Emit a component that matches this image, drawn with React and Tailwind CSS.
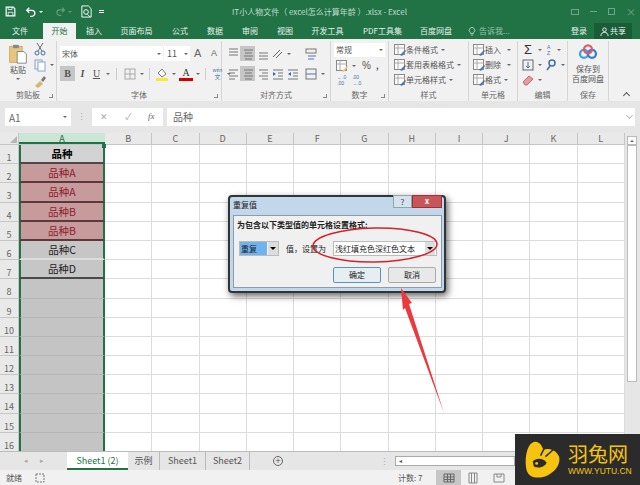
import React from "react";

const F = { fontFamily: '"Noto Sans CJK SC","Liberation Sans",sans-serif' };
const cols = ["B","C","D","E","F","G","H","I","J","K","L"];
const rows = Array.from({ length: 16 }, (_, i) => i + 1);
const pink = "bg-[#c79a9c] text-[#8c1c2c] border-b-2 border-b-[#5a3a3c]";
const cellA = {
  1: ["品种", "bg-[#d3d3d3] text-black font-bold border-b-2 border-b-[#4a4a4a]"],
  2: ["品种A", pink],
  3: ["品种A", pink],
  4: ["品种B", pink],
  5: ["品种B", pink],
  6: ["品种C", "bg-[#c6c6c6] text-[#222] border-b-2 border-b-[#dcdcdc]"],
  7: ["品种D", "bg-[#c6c6c6] text-[#222] border-b-2 border-b-[#4a4a4a]"],
};

function Caret({ className = "ml-[3px]" }) {
  return <span className={`w-0 h-0 border-x-[2px] border-x-transparent border-t-[2px] border-t-[#666] inline-block shrink-0 ${className}`} />;
}

function Group({ label, w, children, launcher }) {
  return (
    <div className={`${w} shrink-0 h-full flex flex-col border-r border-[#d5d5d5] relative`}>
      <div className="flex-1 min-h-0 flex">{children}</div>
      <div className="h-[14px] pt-px text-[8px] leading-[13px] text-[#666] text-center">{label}</div>
      {launcher && <span className="absolute right-[3px] bottom-[3px] w-[4px] h-[4px] border-r border-b border-[#888]" />}
    </div>
  );
}

function Ico({ children, className = "" }) {
  return <svg viewBox="0 0 14 14" className={`w-[14px] h-[14px] shrink-0 ${className}`} fill="none">{children}</svg>;
}

const Lines = ({ kind, active }) => {
  const rowsY = kind === "t" ? [2, 5, 8] : kind === "b" ? [6, 9, 12] : [3, 6, 9, 12];
  const seg = (i) => {
    if (kind === "l") return i % 2 ? "M3 0h6" : "M3 0h9";
    if (kind === "r") return i % 2 ? "M6 0h6" : "M3 0h9";
    return i % 2 && kind === "c" ? "M4 0h7" : "M3 0h9";
  };
  return (
    <div className={`w-[15px] h-[15px] flex items-center justify-center ${active ? "bg-[#c6c6c6]" : ""}`}>
      <Ico>{rowsY.map((y, i) => <path key={y} d={seg(i).replace(" 0", ` ${y}`)} stroke="#777" />)}</Ico>
    </div>
  );
};

const Indent = ({ flip }) => (
  <div className="w-[15px] h-[15px] flex items-center justify-center">
    <Ico><path d="M2 3h10M7 6h5M7 9h5M2 12h10" stroke="#777" /><path d={flip ? "M5 5v4L2 7z" : "M2 5v4l3-2z"} fill="#3f6fa8" /></Ico>
  </div>
);

const StyleIcon = ({ c = "#4a77b5" }) => (
  <Ico><rect x="1.500" y="1.500" width="10" height="10" stroke="#888" fill="#fff" /><path d="M1.500 5H11.500M5 1.500V11.500" stroke="#aaa" /><path d="M7 12l5-5 1 1-4 5z" fill={c} /></Ico>
);

function StyleRow({ text, gap = "ml-[3px]" }) {
  return (
    <div className="h-[15px] flex items-center text-[8px] leading-none text-[#555] whitespace-nowrap">
      <StyleIcon />
      <span className="ml-[-1px]">{text}</span>
      <Caret className={gap} />
    </div>
  );
}

function Ribbon() {
  return (
    <div className="h-[62px] bg-[#f1f1f1] flex pt-[2px] text-[#555]">
      <Group label="剪贴板" w="w-[57px]" launcher>
        <div className="w-[33px] flex flex-col items-center pt-[3px] pl-[3px]">
          <svg viewBox="0 0 24 24" className="w-[20px] h-[20px]"><rect x="2" y="3" width="15" height="19" fill="#e8c67f" stroke="#c9a55f" /><rect x="6" y="1" width="7" height="4" fill="#888" /><path d="M11 9h8l3 3v11H11z" fill="#fff" stroke="#777" /></svg>
          <span className="text-[8px] leading-[12px]">粘贴</span>
          <Caret className="mt-[2px]" />
        </div>
        <div className="flex flex-col pt-[1px] gap-[2px]">
          <Ico><path d="M4 1l5 8M10 1L5 9" stroke="#667" /><circle cx="4" cy="11" r="2" stroke="#3f6fa8" /><circle cx="10" cy="11" r="2" stroke="#3f6fa8" /></Ico>
          <div className="flex items-center"><Ico><rect x="2" y="2" width="7" height="9" stroke="#8aa4c4" /><rect x="5" y="4" width="7" height="9" fill="#fff" stroke="#8aa4c4" /></Ico><Caret /></div>
          <Ico><path d="M2 12l5-5 3 3-5 4z" fill="#d9b56a" /><path d="M8 6l3-4 2 2-3 4z" fill="#777" /></Ico>
        </div>
      </Group>
      <Group label="字体" w="w-[165px]" launcher>
        <div className="flex flex-col pl-[3px] pt-[5px] gap-[5px]">
          <div className="flex h-[15px]">
            <div className="w-[103px] bg-white flex items-center justify-between px-[2px] text-[8px]"><span>宋体</span><Caret /></div>
            <div className="w-[26px] ml-px bg-white flex items-center justify-between pl-[3px] pr-[2px] text-[9px]"><span>11</span><Caret /></div>
            <span className="text-[11px] leading-[15px] ml-[4px] w-[14px] text-[#666]" style={{ fontFamily: '"Liberation Sans",sans-serif' }}>A</span>
            <span className="text-[9px] leading-[15px] ml-[3px] w-[10px] text-[#666]" style={{ fontFamily: '"Liberation Sans",sans-serif' }}>A</span>
          </div>
          <div className="flex items-center h-[15px] text-[10px]" style={{ fontFamily: '"Liberation Serif",serif' }}>
            <span className="w-[15px] h-[15px] bg-[#c6c6c6] font-bold text-center leading-[15px]">B</span>
            <span className="w-[15px] text-center italic font-bold">I</span>
            <span className="w-[13px] text-center underline">U</span><Caret />
            <span className="w-px h-[12px] bg-[#ccc] mx-[6px]" />
            <Ico><rect x="2" y="2" width="10" height="10" stroke="#aaa" /><path d="M7 2v10M2 7h10" stroke="#aaa" /></Ico><Caret />
            <span className="w-px h-[12px] bg-[#ccc] mx-[5px]" />
            <Ico><path d="M7 2l4 5-4 3-4-4z" fill="#fff" stroke="#777" /><rect x="1" y="11" width="12" height="3" fill="#f2e93a" /></Ico><Caret />
            <div className="relative w-[14px] h-[14px] ml-[3px] text-center leading-[11px] text-[#333]">A<span className="absolute left-0 right-0 bottom-0 h-[3px] bg-[#d00000]" /></div><Caret />
            <span className="w-px h-[12px] bg-[#ccc] mx-[5px]" />
            <span className="flex flex-col items-center text-[5px] leading-[6px] text-[#3f6fa8] w-[13px]" style={F}><span>wén</span><span className="text-[6px] leading-[8px]">文</span></span><Caret />
          </div>
        </div>
      </Group>
      <Group label="对齐方式" w="w-[109px]" launcher>
        <div className="flex flex-col pl-[3px] pt-[5px] gap-[5px]">
          <div className="flex items-center h-[15px]">
            <Lines kind="t" /><Lines kind="c" active /><Lines kind="b" />
            <Ico><path d="M3 10l7-7M6 11l6-6" stroke="#666" /></Ico><Caret />
          </div>
          <div className="flex items-center h-[15px]">
            <Lines kind="l" /><Lines kind="c" active /><Lines kind="r" />
            <Indent /><Indent flip />
          </div>
        </div>
        <div className="flex flex-col pl-[4px] pt-[5px] gap-[5px]">
          <div className="h-[15px] flex items-center"><Ico><rect x="2" y="2" width="10" height="4" stroke="#777" /><path d="M4 9h8M4 12h6" stroke="#4a77b5" /></Ico></div>
          <div className="h-[15px] flex items-center"><Ico><rect x="2" y="2" width="10" height="10" stroke="#777" /><path d="M2 7h10" stroke="#4a77b5" /></Ico><Caret /></div>
        </div>
      </Group>
      <Group label="数字" w="w-[58px]" launcher>
        <div className="flex flex-col pl-[3px] pt-[2px] w-full">
          <div className="w-[51px] h-[14px] bg-white flex items-center justify-between px-[2px] text-[8px]"><span>常规</span><Caret /></div>
          <div className="flex items-center h-[15px] mt-px pl-px"><StyleIcon c="#e8c67f" /><Caret /><span className="ml-[6px] text-[10px]" style={{ fontFamily: '"Liberation Sans",sans-serif' }}>%</span><span className="ml-[5px] font-bold text-[8px]">,</span></div>
          <div className="flex items-center h-[14px] gap-[6px] text-[#3f6fa8] pl-[3px]" style={{ fontFamily: '"Liberation Sans",sans-serif' }}>
            <span className="flex flex-col text-[5px] leading-[6px]"><span>←.0</span><span>.00</span></span>
            <span className="flex flex-col text-[5px] leading-[6px]"><span>.00</span><span>→.0</span></span>
          </div>
        </div>
      </Group>
      <Group label="样式" w="w-[80px]">
        <div className="flex flex-col pl-[4px] pt-px">
          <StyleRow text="条件格式" />
          <StyleRow text="套用表格格式" />
          <StyleRow text="单元格样式" />
        </div>
      </Group>
      <Group label="单元格" w="w-[49px]">
        <div className="flex flex-col pl-[3px] pt-px">
          <StyleRow text="插入" gap="ml-[6px]" />
          <StyleRow text="删除" gap="ml-[6px]" />
          <StyleRow text="格式" gap="ml-[3px]" />
        </div>
      </Group>
      <Group label="编辑" w="w-[50px]">
        <div className="flex flex-col pl-[3px] pt-px">
          <div className="flex items-center h-[15px]"><span className="text-[13px] leading-none w-[14px] text-[#333] text-center" style={{ fontFamily: '"Liberation Sans",sans-serif' }}>Σ</span><Caret /><span className="flex flex-col text-[5px] leading-[6px] ml-[5px] text-[#3f6fa8] w-[7px]" style={{ fontFamily: '"Liberation Sans",sans-serif' }}><span>A</span><span>Z</span></span><Caret /></div>
          <div className="flex items-center h-[15px]"><Ico><rect x="2" y="2" width="10" height="10" stroke="#666" /><path d="M7 4v6M5 8l2 2 2-2" stroke="#3f6fa8" /></Ico><Caret /><Ico className="ml-[2px]"><circle cx="8" cy="5" r="3" stroke="#3f6fa8" strokeWidth="1.500" /><path d="M6 8l-3 4" stroke="#3f6fa8" strokeWidth="1.500" /></Ico><Caret /></div>
          <div className="flex items-center h-[15px]"><Ico><path d="M2 9l6-6 4 3-6 6H4z" fill="#e59aa2" stroke="#c66" /></Ico><Caret /></div>
        </div>
      </Group>
      <Group label="保存" w="w-[41px]">
        <div className="w-full flex flex-col items-center pt-[3px]">
          <svg viewBox="0 0 22 18" className="w-[20px] h-[16px]" fill="none"><circle cx="6.500" cy="11" r="4.500" stroke="#3aa0e0" strokeWidth="2.500" /><circle cx="15.500" cy="11" r="4.500" stroke="#2f7fd0" strokeWidth="2.500" /><circle cx="11" cy="6" r="4.500" stroke="#e05a6a" strokeWidth="2.500" /></svg>
          <span className="flex flex-col items-center text-[8px] leading-[10px] mt-[4px] whitespace-nowrap"><span>保存到</span><span>百度网盘</span></span>
        </div>
      </Group>
      <div className="flex-1 relative"><span className="absolute right-[11px] bottom-[3px] w-[5px] h-[5px] border-l border-t border-[#555] rotate-45" /></div>
    </div>
  );
}

function Sheet() {
  return (
    <div className="h-[318px] flex overflow-hidden bg-[#e6e6e6] text-[10.500px] relative">
      <div className="w-[625px] shrink-0 flex flex-col bg-white">
        <div className="h-[12px] flex shrink-0 bg-[#e9e9e9] border-b border-[#c6c6c6] text-[9px] leading-[11px] text-[#666]">
          <div className="w-[19px] border-r border-[#c6c6c6] relative"><span className="absolute right-[1px] bottom-[1px] w-0 h-0 border-l-[7px] border-l-transparent border-b-[7px] border-b-[#b5b5b5]" /></div>
          <div className="w-[86px] text-center bg-[#c9e6d6] text-[#1f6b43] border-b-2 border-[#217346]">A</div>
          {cols.map((c) => <div key={c} className="w-[47.270px] text-center border-r border-[#c6c6c6] shrink-0">{c}</div>)}
        </div>
        {rows.map((r) => {
          const a = cellA[r];
          return (
            <div key={r} className="h-[19.200px] flex shrink-0">
              <div className="w-[19px] shrink-0 bg-[#e9e9e9] border-r border-b border-[#c6c6c6] text-[9px] text-[#666] text-center pt-[8px] leading-[9px]">{r}</div>
              <div className={`w-[86px] shrink-0 border-x-2 border-[#217346] text-center leading-[17px] ${a ? a[1] : "bg-[#c4c4c4] border-b border-b-[#b5b5b5]"}`}>{a ? a[0] : ""}</div>
              {cols.map((c) => <div key={c} className="w-[47.270px] shrink-0 border-r border-b border-[#dcdcdc]" />)}
            </div>
          );
        })}
      </div>
      <span className="absolute left-[102px] top-[11px] w-[4px] h-[4px] bg-[#217346]" />
      <div className="flex-1 flex flex-col pl-[2px] pt-[3px]">
        <div className="w-[10px] h-[9px] bg-white border border-[#bbb] flex items-center justify-center"><span className="w-0 h-0 border-x-[2px] border-x-transparent border-b-[2px] border-b-[#666]" /></div>
        <div className="w-[10px] h-[237px] bg-white border border-[#bbb]" />
      </div>
    </div>
  );
}

const Drop = () => (
  <span className="w-[10px] h-[13px] bg-[#ddd] flex items-center justify-center shrink-0"><span className="w-0 h-0 border-x-[3px] border-x-transparent border-t-[3px] border-t-black" /></span>
);

function Dialog() {
  return (
    <div className="absolute left-[228px] top-[195px] w-[218px] h-[98px] rounded-[4px] bg-[#c2d7ea] border-2 border-[#30353a] shadow-[2px_3px_7px_rgba(0,0,0,0.6)] flex flex-col text-[8px] text-[#222]">
      <div className="h-[18px] relative pl-[3px] leading-[16px] text-[8px] shrink-0">
        重复值
        <div className="absolute top-[-2px] right-[2px] h-[13px] flex">
          <span className="w-[19px] bg-[#d6e2ee] border border-[#8aa] text-center leading-[11px] text-[#345]">?</span>
          <span className="w-[30px] bg-[#c8555a] border border-[#933] text-center leading-[10px] text-white font-bold">x</span>
        </div>
      </div>
      <div className="flex-1 ml-[3px] mr-[2px] mb-[3px] bg-[#f0f0f0] border border-[#8b9cab] flex flex-col">
        <div className="font-bold mt-[2px] ml-[3px] leading-[14px] whitespace-nowrap">为包含以下类型值的单元格设置格式:</div>
        <div className="flex items-center mt-[9px] h-[15px] ml-[5px] whitespace-nowrap">
          <div className="w-[40px] h-[15px] border border-[#bbb] bg-white flex items-center justify-between">
            <span className="bg-[#6fb3ee] px-px leading-[13px] w-[27px]">重复</span>
            <Drop />
          </div>
          <span className="ml-[7px] w-[41px]">值，设置为</span>
          <div className="ml-[6px] w-[104px] h-[15px] border border-[#bbb] bg-white flex items-center justify-between pl-[1px] pr-px">
            <span>浅红填充色深红色文本</span>
            <Drop />
          </div>
        </div>
        <div className="flex justify-end gap-[7px] mt-[11px] mr-[5px]">
          <span className="w-[48px] h-[16px] border border-[#5a93b8] rounded-[2px] bg-[#e6eef2] text-center leading-[14px]">确定</span>
          <span className="w-[48px] h-[16px] border border-[#aaa] rounded-[2px] bg-[#e8e8e8] text-center leading-[14px]">取消</span>
        </div>
      </div>
    </div>
  );
}

export default function App() {
  return (
    <div className="relative w-[640px] h-[485px] overflow-hidden bg-white" style={F}>
      <div className="h-[23px] bg-[#217346] flex items-center text-white">
        <div className="w-[232px] shrink-0 flex items-center pl-[5px]">
          <svg viewBox="0 0 14 14" className="w-[11px] h-[11px]" fill="none"><path d="M1.500 1.500h9l2 2v9h-11z" stroke="#fff" strokeWidth="1.500" /><path d="M4 1.500v3h5v-3M4 12.500V8h6v4.500" stroke="#fff" /></svg>
          <svg viewBox="0 0 14 14" className="w-[12px] h-[12px] ml-[9px]" fill="none"><path d="M5 2L2 5l3 3M2 5h6a3.500 3.500 0 0 1 0 7H6" stroke="#fff" strokeWidth="1.500" /></svg>
          <span className="w-0 h-0 border-x-[2px] border-x-transparent border-t-[2px] border-t-white ml-[2px]" />
          <svg viewBox="0 0 14 14" className="w-[11px] h-[11px] ml-[12px] opacity-30" fill="none"><path d="M9 2l3 3-3 3M12 5H6a3.500 3.500 0 0 0 0 7h2" stroke="#fff" strokeWidth="1.500" /></svg>
          <span className="w-0 h-0 border-x-[2px] border-x-transparent border-t-[2px] border-t-white ml-[2px] opacity-30" />
          <svg viewBox="0 0 14 14" className="w-[13px] h-[13px] ml-[8px]" fill="none"><path d="M2 1h7l3 3v9H2z" stroke="#fff" /><circle cx="6.500" cy="7.500" r="2.500" stroke="#fff" /><path d="M8 10l3 3" stroke="#fff" /></svg>
          <span className="w-[5px] h-[3px] border-t border-b border-white ml-[6px]" />
        </div>
        <div className="text-[8px] leading-[14px] text-[#c0dccb] whitespace-nowrap">IT小人物文件（ excel怎么计算年龄 ）.xlsx - Excel</div>
        <div className="ml-auto flex items-center gap-[11px] pr-[7px] text-[#6fa588]">
          <span className="w-[8px] h-[6px] border border-current" />
          <span className="w-[7px] h-px bg-current" />
          <span className="w-[7px] h-[7px] border border-current" />
          <span className="text-[10px] leading-none w-[7px]">×</span>
        </div>
      </div>
      <div className="h-[16px] bg-[#217346] flex items-stretch text-[8px] leading-[16px] text-[#e8f2ec] whitespace-nowrap">
        <span className="w-[40px] text-center">文件</span>
        <span className="w-[33px] ml-[3px] text-center bg-[#f1f1f1] text-[#217346]">开始</span>
        <span className="w-[36px] text-center">插入</span>
        <span className="w-[49px] text-center">页面布局</span>
        <span className="w-[38px] text-center">公式</span>
        <span className="w-[32px] text-center">数据</span>
        <span className="w-[38px] text-center">审阅</span>
        <span className="w-[32px] text-center">视图</span>
        <span className="w-[53px] text-center">开发工具</span>
        <span className="w-[57px] text-center">PDF工具集</span>
        <span className="w-[50px] text-center">百度网盘</span>
        <span className="w-[100px] flex items-center pl-[7px] text-[#9cc5ae]">
          <svg viewBox="0 0 10 12" className="w-[8px] h-[10px] mr-[3px]" fill="none"><path d="M3 8a3.500 3.500 0 1 1 4 0v1H3zM3.500 11h3" stroke="#bfe0cd" /></svg>
          告诉我...
        </span>
        <span className="w-[33px] text-right pr-[7px]">登录</span>
        <span className="w-[38px] bg-[#1a5c38] flex items-center justify-center">
          <svg viewBox="0 0 10 10" className="w-[9px] h-[9px] mr-[1px]" fill="none"><circle cx="5" cy="3" r="2" stroke="#fff" /><path d="M1 10c0-3 2-4 4-4s4 1 4 4" stroke="#fff" /></svg>
          共享
        </span>
      </div>
      <Ribbon />
      <div className="h-[32px] bg-[#e6e6e6] flex items-start pt-[7px] pl-[5px] text-[10px] text-[#666]">
        <div className="w-[66px] h-[18px] bg-white flex items-center justify-between px-[4px]"><span>A1</span><Caret /></div>
        <span className="w-[21px] text-center text-[#aaa] text-[9px] leading-[18px]">⋮</span>
        <div className="w-[71px] h-[18px] bg-white flex items-center justify-around text-[9px] text-[#aaa]"><span>✕</span><span>✓</span><span className="italic text-[#666]" style={{ fontFamily: '"Liberation Serif",serif' }}>fx</span></div>
        <div className="w-[468px] ml-[4px] h-[18px] bg-white pl-[6px] leading-[18px] flex justify-between pr-[3px]"><span>品种</span><span className="w-[5px] h-[5px] border-r border-b border-[#bbb] rotate-45 mt-[5px]" /></div>
      </div>
      <Sheet />
      <div className="h-[19px] bg-[#e6e6e6] border-t border-[#bbb] flex items-stretch text-[9px] leading-[17px] text-[#555] whitespace-nowrap">
        <div className="w-[67px] flex justify-center gap-[12px] text-[7px] text-[#aaa]"><span>◂</span><span>▸</span></div>
        <span className="w-[61px] text-center bg-white text-[#217346] border-b-2 border-[#217346]">Sheet1 (2)</span>
        <span className="w-[32px] text-center border-r border-[#bbb]">示例</span>
        <span className="w-[46px] text-center border-r border-[#bbb]">Sheet1</span>
        <span className="w-[44px] text-center border-r border-[#bbb]">Sheet2</span>
        <span className="w-[28px] ml-[14px] flex items-center justify-center"><span className="w-[10px] h-[10px] rounded-full border border-[#666] text-center leading-[8px] text-[9px]">+</span></span>
        <div className="ml-[88px] flex items-center"><span className="w-[15px] text-[#aaa]">⋮</span><div className="w-[120px] h-[10px] bg-white border border-[#aaa] text-[6px] leading-[8px] pl-[3px]">◂</div></div>
      </div>
      <div className="h-[15px] bg-[#f1f1f1] flex items-center text-[8px] text-[#555] whitespace-nowrap">
        <span className="ml-[6px] w-[16px]">就绪</span>
        <Ico className="ml-[11px]"><rect x="3" y="3" width="8" height="8" stroke="#777" strokeDasharray="2 1" /></Ico>
        <span className="ml-[351px] w-[25px]">计数: 7</span>
        <div className="ml-[13px] w-[25px] h-[15px] bg-[#c6c6c6] flex items-center justify-center"><Ico><path d="M2 3h10v8H2zM2 6h10M2 8.500h10M5.500 3v8M8.500 3v8" stroke="#666" /></Ico></div>
        <Ico className="ml-[5px]"><path d="M3 2h8v10H3zM5.500 2v10M8.500 2v10" stroke="#888" /></Ico>
        <Ico className="ml-[12px]"><path d="M2 3h10v8H2zM5 3v3h4V3" stroke="#888" /></Ico>
      </div>
      <Dialog />
      <svg className="absolute left-0 top-0 w-[640px] h-[485px] pointer-events-none" viewBox="0 0 640 485" fill="none">
        <ellipse cx="375" cy="245" rx="62" ry="17" stroke="#d0242c" strokeWidth="1.500" transform="rotate(-1 375 245)" />
        <path d="M401 288L412 303L409 304L444 413L405 308L403 310Z" fill="#ea3a3d" />
      </svg>
      <div className="absolute left-[515px] top-[434px] w-[125px] h-[51px] bg-[#2b2b2b] flex items-center pl-[10px] gap-[8px]">
        <svg viewBox="0 0 36 38" className="w-[35px] h-[37px] shrink-0"><path d="M9 1c6-1 8 4 10 8 5-2 13 0 16 7 2 8-4 16-13 20-9 3-17 2-20-5C-1 23 1 3 9 1z" fill="#f6c40e" /><path d="M8 21c3-4 11-4 14 1 0 4-9 7-13 4z" fill="#2b2b2b" /><path d="M16 15L21 5M21 16L29 9" stroke="#2b2b2b" strokeWidth="1.500" /><circle cx="12" cy="23" r="1.500" fill="#f6c40e" /></svg>
        <div className="flex flex-col text-[#f6c40e] leading-none">
          <span className="text-[20px] leading-[22px]">羽兔网</span>
          <span className="text-[8.500px] leading-[10px] mt-[1px]" style={{ fontFamily: '"Liberation Sans",sans-serif' }}>WWW.YUTU.CN</span>
        </div>
      </div>
    </div>
  );
}
